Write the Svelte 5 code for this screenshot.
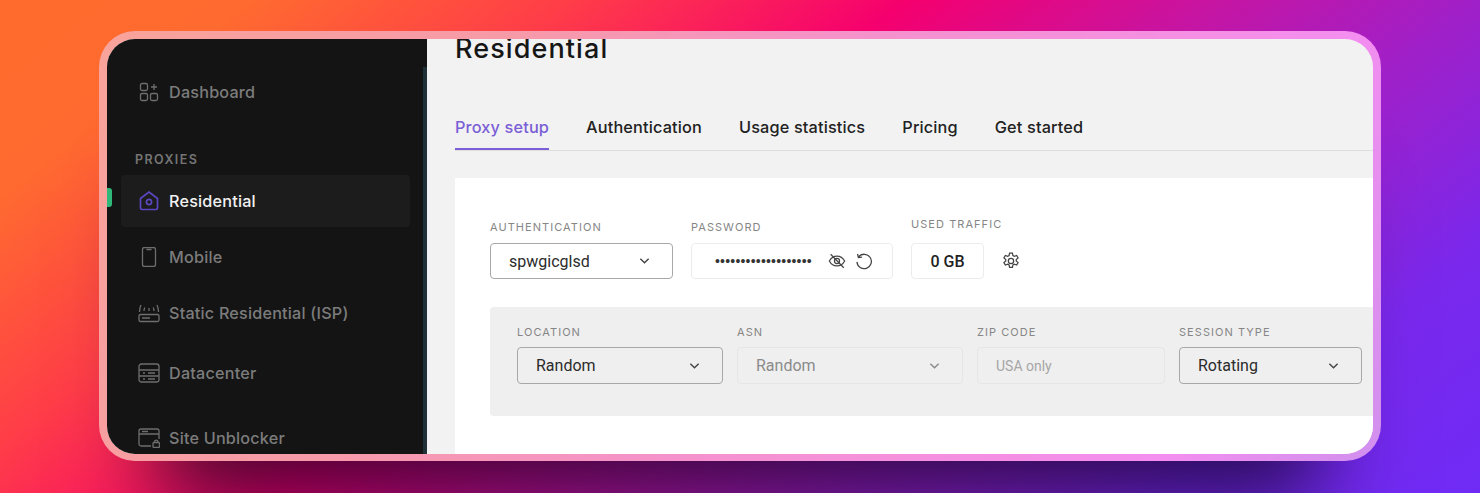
<script>
  const tabs = ['Proxy setup', 'Authentication', 'Usage statistics', 'Pricing', 'Get started']
</script>

<div class="stage">
  <div class="frame">
    <div class="window">
      <aside class="sidebar">
        <div class="scrollbar"></div>
        <a class="nav dash">
          <svg viewBox="0 0 20 20" class="ico">
            <rect x="1.500" y="1.500" width="7" height="7" rx="1.500" />
            <rect x="1.500" y="11.500" width="7" height="7" rx="1.500" />
            <rect x="11.500" y="11.500" width="7" height="7" rx="1.500" />
            <path d="M15 2v6M12 5h6" />
          </svg>
          Dashboard
        </a>
        <div class="section">PROXIES</div>
        <a class="nav active">
          <span class="marker"></span>
          <svg viewBox="0 0 20 20" class="ico">
            <path d="M1.500 7.500 10 1 18.500 7.500v9.500a1.500 1.500 0 0 1-1.500 1.500H3A1.500 1.500 0 0 1 1.500 17Z" />
            <circle cx="10" cy="11" r="2.600" />
          </svg>
          Residential
        </a>
        <a class="nav">
          <svg viewBox="0 0 20 20" class="ico">
            <rect x="3.500" y="0.500" width="13" height="19" rx="2" />
            <path d="M7.500 2.500h5M10 15.500h.01" />
          </svg>
          Mobile
        </a>
        <a class="nav">
          <svg viewBox="0 0 22 20" class="ico wide">
            <rect x="1" y="11.500" width="20" height="7" rx="1.500" />
            <path d="M4 15h8M1.500 9c0-3 .5-5 1.500-7M20.500 9c0-3-.5-5-1.500-7M6 8c0-1.500.2-2.500.8-3.500M16 8c0-1.500-.2-2.500-.8-3.500M11 8v-3" />
          </svg>
          Static Residential (ISP)
        </a>
        <a class="nav dc">
          <svg viewBox="0 0 22 20" class="ico wide">
            <rect x="1" y="1" width="20" height="18" rx="2.500" />
            <path d="M1 7h20M1 13h20M5 10h2M10 10h7M5 16h2M10 16h7" />
          </svg>
          Datacenter
        </a>
        <a class="nav su">
          <svg viewBox="0 0 22 20" class="ico wide">
            <path d="M13 18H3a2 2 0 0 1-2-2V3a2 2 0 0 1 2-2h16a2 2 0 0 1 2 2v8M1 6h20M4 3.500h6" />
            <rect x="15" y="14.500" width="6.500" height="5" rx="1" />
            <path d="M16.500 14.500v-1a1.800 1.800 0 0 1 3.500 0v1" />
          </svg>
          Site Unblocker
        </a>
      </aside>

      <main class="main">
        <h1>Residential</h1>
        <nav class="tabs">
          {#each tabs as tab, i}
            <span class="tab" class:current={i === 0}>{tab}</span>
          {/each}
        </nav>

        <section class="card">
          <div class="top-row">
            <div class="field auth">
              <label>AUTHENTICATION</label>
              <div class="select strong">spwgicglsd
                <svg viewBox="0 0 12 8" class="chev"><path d="M1.500 1.500 6 6l4.500-4.500" /></svg>
              </div>
            </div>
            <div class="field pass">
              <label>PASSWORD</label>
              <div class="select soft">
                <span class="dots">•••••••••••••••••••</span>
                <svg viewBox="0 0 20 20" class="act">
                  <path d="M1.500 10S4.500 4.500 10 4.500 18.500 10 18.500 10 15.500 15.500 10 15.500 1.500 10 1.500 10Z" />
                  <circle cx="10" cy="10" r="2.800" />
                  <path d="M3 2.500 17.500 17.500" />
                </svg>
                <svg viewBox="0 0 20 20" class="act redo">
                  <path d="M4.200 5.200A8 8 0 1 1 2.200 11M2.800 2.200l1 4 4-.6" />
                </svg>
              </div>
            </div>
            <div class="field traffic">
              <label>USED TRAFFIC</label>
              <div class="row">
                <div class="gb">0 GB</div>
                <svg viewBox="0 0 24 24" class="gear">
                  <path d="M10.300 2.500h3.400l.6 2.900 1.700.9 2.800-1 1.700 3-2.200 1.900v1.800l2.200 1.900-1.700 3-2.800-1-1.700.9-.6 2.900h-3.400l-.6-2.900-1.700-.9-2.800 1-1.700-3 2.200-1.900v-1.800L3.500 8.300l1.700-3 2.800 1 1.700-.9Z" />
                  <circle cx="12" cy="12" r="3.200" />
                </svg>
              </div>
            </div>
          </div>

          <div class="panel">
            <div class="field loc">
              <label>LOCATION</label>
              <div class="select strong">Random
                <svg viewBox="0 0 12 8" class="chev"><path d="M1.500 1.500 6 6l4.500-4.500" /></svg>
              </div>
            </div>
            <div class="field asn">
              <label>ASN</label>
              <div class="select off">Random
                <svg viewBox="0 0 12 8" class="chev"><path d="M1.500 1.500 6 6l4.500-4.500" /></svg>
              </div>
            </div>
            <div class="field zip">
              <label>ZIP CODE</label>
              <div class="select off small">USA only</div>
            </div>
            <div class="field session">
              <label>SESSION TYPE</label>
              <div class="select strong">Rotating
                <svg viewBox="0 0 12 8" class="chev"><path d="M1.500 1.500 6 6l4.500-4.500" /></svg>
              </div>
            </div>
          </div>
        </section>
      </main>
    </div>
  </div>
</div>

<style>
  :global(body) {
    margin: 0;
  }

  .stage {
    height: 493px;
    box-sizing: border-box;
    padding: 31px 99px 32px;
    overflow: hidden;
    font-family: Inter, "Open Sans", sans-serif;
    background: linear-gradient(142deg, #ff6b2c 0%, #ff6a30 12%, #ff3d48 27%, #f5006e 43%, #c814a0 57%, #a020c8 70%, #7a28ec 85%, #6f2bf5 100%);
  }

  .frame {
    height: 430px;
    box-sizing: border-box;
    padding: 8px 8px 7px;
    border-radius: 36px;
    background: linear-gradient(115deg, #f8a39a 0%, #f79aa8 28%, #f592cc 52%, #f48ef0 85%, #d090ee 100%);
    box-shadow: 0 100px 80px -60px rgba(10, 0, 30, 0.72);
  }

  .window {
    display: flex;
    height: 100%;
    border-radius: 28px;
    overflow: hidden;
    background: #f2f2f2;
  }

  .sidebar {
    position: relative;
    flex: 0 0 320px;
    box-sizing: border-box;
    padding: 25px 0 0 14px;
    background: #141414;
    overflow: hidden;
  }

  .scrollbar {
    position: absolute;
    right: 0;
    top: 28px;
    bottom: 0;
    width: 4px;
    background: #1f3036;
  }

  .nav {
    position: relative;
    display: flex;
    align-items: center;
    gap: 10px;
    width: 289px;
    height: 56px;
    padding-left: 18px;
    box-sizing: border-box;
    font-size: 16.200px;
    font-weight: 500;
    color: #7c7c7c;
    letter-spacing: 0.200px;
  }

  .section {
    margin: 32px 0 7px 14px;
    font-size: 12.500px;
    font-weight: 600;
    line-height: 16px;
    letter-spacing: 1.400px;
    color: #747474;
  }

  .active {
    height: 52px;
    margin-bottom: 2px;
    background: #1c1c1c;
    border-radius: 4px;
    color: #f1f1f1;
  }

  .marker {
    position: absolute;
    left: -14px;
    top: 13px;
    width: 5px;
    height: 19px;
    background: #2fb87a;
    border-radius: 0 3px 3px 0;
  }

  .dc {
    height: 64px;
  }

  .su {
    height: 66px;
  }

  .ico {
    flex: 0 0 20px;
    width: 20px;
    height: 20px;
    fill: none;
    stroke: #6e6e6e;
    stroke-width: 1.300;
  }

  .wide {
    flex-basis: 22px;
    width: 22px;
    margin-left: -1px;
    margin-right: -1px;
  }

  .active .ico {
    stroke: #5b46c0;
    stroke-width: 1.700;
  }

  .main {
    flex: 1;
    min-width: 0;
    padding-left: 28px;
  }

  h1 {
    margin: -8px 0 0;
    font-size: 27px;
    line-height: 36px;
    font-weight: 500;
    letter-spacing: 1.100px;
    color: #161616;
  }

  .tabs {
    display: flex;
    gap: 37px;
    margin-top: 42px;
    border-bottom: 1px solid #dedede;
    height: 41px;
  }

  .tab {
    height: 41px;
    box-sizing: border-box;
    padding-top: 8px;
    font-size: 16.300px;
    line-height: 20px;
    font-weight: 500;
    letter-spacing: 0.150px;
    color: #222;
  }

  .current {
    color: #7a5fd6;
    border-bottom: 2px solid #7a5fd6;
  }

  .card {
    margin-top: 27px;
    height: 290px;
    background: #fff;
    padding: 41px 0 0 35px;
  }

  .top-row {
    display: flex;
    gap: 18px;
  }

  .field {
    display: flex;
    flex-direction: column;
    gap: 8px;
  }

  label {
    font-size: 11px;
    line-height: 16px;
    letter-spacing: 1.050px;
    color: #868686;
    white-space: nowrap;
  }

  .select {
    display: flex;
    align-items: center;
    height: 36px;
    box-sizing: border-box;
    padding: 0 19px 0 18px;
    font-family: Roboto, sans-serif;
    font-size: 16px;
    color: #2b2b2b;
    border-radius: 4px;
  }

  .strong {
    border: 1px solid #a8a8a8;
  }

  .soft {
    border: 1px solid #ececec;
  }

  .off {
    border: 1px solid #e6e6e6;
    color: #8b8b8b;
  }

  .small {
    font-size: 14px;
    color: #a6a6a6;
  }

  .chev {
    width: 11px;
    height: 8px;
    margin-left: auto;
    margin-right: 3px;
    fill: none;
    stroke: #444;
    stroke-width: 1.500;
  }

  .off .chev {
    stroke: #8a8a8a;
  }

  .auth {
    width: 183px;
  }

  .pass {
    width: 202px;
  }

  .pass .select {
    padding: 0 19px 0 23px;
  }

  .dots {
    font-family: "Liberation Sans", sans-serif;
    font-size: 14px;
    letter-spacing: 0.200px;
    color: #333;
    margin-right: auto;
    white-space: nowrap;
  }

  .act {
    width: 18px;
    height: 18px;
    fill: none;
    stroke: #444;
    stroke-width: 1.400;
  }

  .redo {
    margin-left: 9px;
  }

  .traffic {
    margin-top: -3px;
    gap: 11px;
  }

  .row {
    display: flex;
    align-items: center;
    gap: 18px;
  }

  .gb {
    width: 73px;
    height: 36px;
    box-sizing: border-box;
    display: flex;
    align-items: center;
    justify-content: center;
    border: 1px solid #ececec;
    border-radius: 4px;
    font-family: Roboto, sans-serif;
    font-size: 16px;
    font-weight: 500;
    color: #222;
  }

  .gear {
    width: 20px;
    height: 20px;
    margin-left: -1px;
    fill: none;
    stroke: #444;
    stroke-width: 1.500;
  }

  .panel {
    display: flex;
    gap: 14px;
    margin-top: 28px;
    height: 109px;
    box-sizing: border-box;
    padding: 17px 0 0 27px;
    background: #efefef;
    border-radius: 4px 0 0 4px;
  }

  .panel .field {
    gap: 7px;
  }

  .panel .select {
    height: 37px;
  }

  .loc {
    width: 206px;
  }

  .asn {
    width: 226px;
  }

  .zip {
    width: 188px;
  }

  .session {
    width: 183px;
  }
</style>
